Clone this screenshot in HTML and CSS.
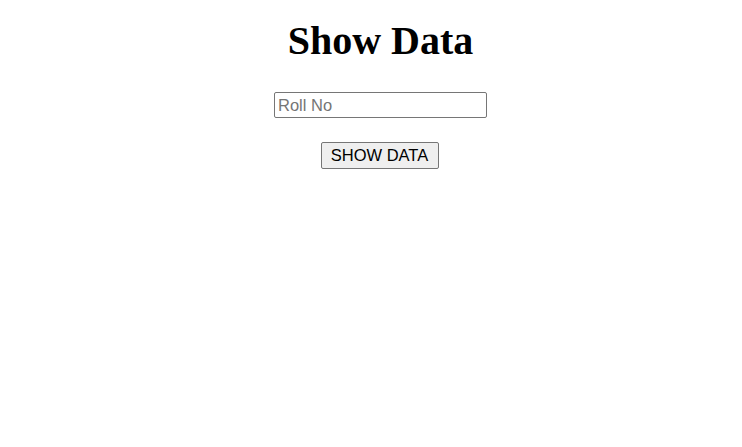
FILE: index.html
```html
<!DOCTYPE html>
<html>
<head>
<meta charset="utf-8">
<title>Show Data</title>
<link rel="stylesheet" href="styles.css">
</head>
<body>
<div class="page">
  <h1 class="title">Show Data</h1>
  <form class="form">
    <input class="field" type="text" placeholder="Roll No">
    <button class="btn" type="button">SHOW DATA</button>
  </form>
</div>
</body>
</html>
```
FILE: styles.css
```css
html, body {
  margin: 0;
  background: #fff;
}
.page {
  display: flex;
  flex-direction: column;
  align-items: center;
  padding-top: 18px;
  padding-left: 19px;
}
.title {
  margin: 0;
  font-family: "Liberation Serif", "Times New Roman", serif;
  font-weight: bold;
  font-size: 40px;
  line-height: 46px;
  color: #000;
}
.form {
  display: flex;
  flex-direction: column;
  align-items: center;
  gap: 24px;
  margin-top: 28px;
}
.field {
  box-sizing: border-box;
  width: 213px;
  height: 26px;
  margin: 0;
  padding: 1px 3px;
  border: 1px solid #767676;
  border-radius: 2px;
  font-family: "Liberation Sans", Arial, sans-serif;
  font-size: 16.5px;
  color: #000;
  background: #fff;
}
.field::placeholder {
  color: #757575;
}
.btn {
  box-sizing: border-box;
  width: 118px;
  height: 27px;
  margin: 0 2px 0 0;
  padding: 1px 6px;
  border: 1px solid #767676;
  border-radius: 2px;
  background: #efefef;
  font-family: "Liberation Sans", Arial, sans-serif;
  font-size: 16.5px;
  color: #000;
}
```
